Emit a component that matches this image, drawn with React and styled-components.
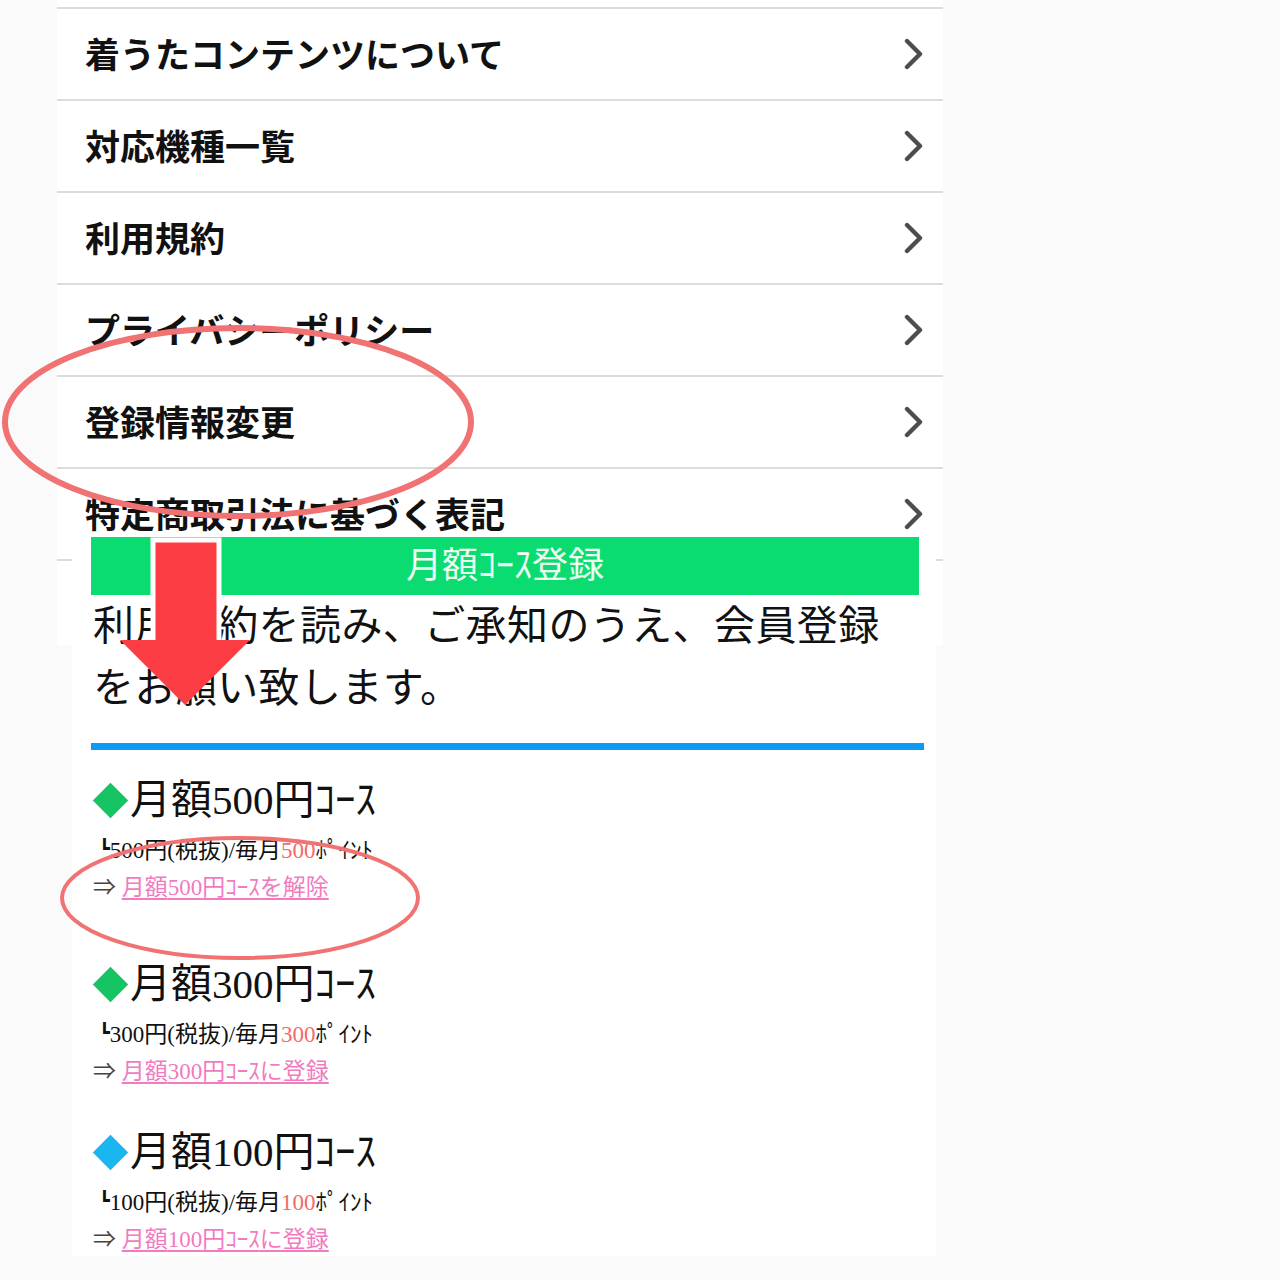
import styled, { createGlobalStyle } from "styled-components";

const GlobalStyle = createGlobalStyle`
  body {
    margin: 0;
    background: #fafafa;
    font-family: "Noto Sans CJK JP", sans-serif;
  }
`;

const Page = styled.div`
  position: relative;
  width: 1280px;
  min-height: 1280px;
  overflow: hidden;
`;

const MenuPanel = styled.ul`
  list-style: none;
  margin: 0 0 0 57px;
  padding: 7px 0 84px;
  width: 886px;
  background: #fff;
`;

const MenuRow = styled.li`
  display: flex;
  align-items: center;
  justify-content: space-between;
  height: 90px;
  padding: 0 20px 0 28px;
  border-top: 2px solid #dcdcdc;
  &:last-child {
    border-bottom: 2px solid #dcdcdc;
  }
`;

const MenuLabel = styled.span`
  font-family: "Noto Sans CJK JP", sans-serif;
  font-weight: 700;
  font-size: 35px;
  line-height: 40px;
  padding-bottom: 3px;
  color: #111;
`;

const CoursePanel = styled.section`
  position: relative;
  z-index: 1;
  margin: -108px 0 0 72px;
  width: 828px;
  padding: 0 17px 0 19px;
  background: #fff;
  font-family: "Liberation Serif", "Noto Sans CJK JP", serif;
  color: #111;
`;

const PanelHeader = styled.h2`
  margin: 0;
  height: 58px;
  background: #0bdc72;
  color: #eefff2;
  font-weight: 400;
  font-size: 36px;
  line-height: 58px;
  text-align: center;
  font-family: inherit;
`;

const Notice = styled.p`
  margin: 0;
  padding-left: 2px;
  width: 800px;
  font-size: 41px;
  line-height: 62px;
  letter-spacing: 0.4px;
`;

const BlueRule = styled.hr`
  margin: 24px -5px 0 0;
  height: 7px;
  border: 0;
  background: #0d9af6;
`;

const CourseList = styled.div`
  padding-top: 20px;
`;

const Course = styled.div`
  margin-bottom: ${({ $gap }) => $gap}px;
  &:last-child {
    margin-bottom: 0;
  }
`;

const CourseTitle = styled.div`
  display: flex;
  align-items: center;
  height: 60px;
  font-size: 41px;
  line-height: 60px;
  padding-left: 7px;
`;

const Diamond = styled.span`
  display: inline-block;
  flex: none;
  width: 25px;
  height: 25px;
  margin-right: 7px;
  background: ${({ $color }) => $color};
  transform: rotate(45deg);
`;

const CourseDetail = styled.div`
  height: 42px;
  font-size: 23px;
  line-height: 42px;
  padding-left: 8px;
`;

const Corner = styled.span`
  position: relative;
  top: -3px;
  font-family: "DejaVu Sans", sans-serif;
  font-weight: 700;
  font-size: 18px;
`;

const Points = styled.span`
  color: #f46a6a;
`;

const CourseAction = styled.div`
  height: 32px;
  font-size: 23px;
  line-height: 32px;
  padding-left: 2px;
  color: #444;
`;

const CourseLink = styled.a`
  color: #f27abf;
  text-decoration: underline;
  text-underline-offset: 3px;
  cursor: pointer;
`;

const Annotations = styled.svg`
  position: absolute;
  left: 0;
  top: 0;
  z-index: 2;
  pointer-events: none;
`;

const Chevron = () => (
  <svg width="20" height="32" viewBox="0 0 20 32">
    <polyline
      points="4,3 17,16 4,29"
      fill="none"
      stroke="#4d4d4d"
      strokeWidth="4.4"
      strokeLinecap="round"
      strokeLinejoin="round"
    />
  </svg>
);

const menuItems = [
  "着うたコンテンツについて",
  "対応機種一覧",
  "利用規約",
  "プライバシーポリシー",
  "登録情報変更",
  "特定商取引法に基づく表記",
];

const courses = [
  { price: "500", color: "#17c463", action: "を解除", gap: 50 },
  { price: "300", color: "#17c463", action: "に登録", gap: 34 },
  { price: "100", color: "#1ab6f2", action: "に登録", gap: 0 },
];

export default function App() {
  return (
    <Page>
      <GlobalStyle />
      <MenuPanel>
        {menuItems.map((label) => (
          <MenuRow key={label}>
            <MenuLabel>{label}</MenuLabel>
            <Chevron />
          </MenuRow>
        ))}
      </MenuPanel>

      <CoursePanel>
        <PanelHeader>月額ｺｰｽ登録</PanelHeader>
        <Notice>利用規約を読み、ご承知のうえ、会員登録をお願い致します。</Notice>
        <BlueRule />
        <CourseList>
          {courses.map(({ price, color, action, gap }) => (
            <Course key={price} $gap={gap}>
              <CourseTitle>
                <Diamond $color={color} />
                月額{price}円ｺｰｽ
              </CourseTitle>
              <CourseDetail>
                <Corner>┗</Corner>
                {price}円(税抜)/毎月<Points>{price}</Points>ﾎﾟｲﾝﾄ
              </CourseDetail>
              <CourseAction>
                ⇒ <CourseLink>月額{price}円ｺｰｽ{action}</CourseLink>
              </CourseAction>
            </Course>
          ))}
        </CourseList>
      </CoursePanel>

      <Annotations width="1280" height="1280" viewBox="0 0 1280 1280">
        <ellipse cx="238" cy="422" rx="233" ry="94" fill="none" stroke="#f07272" strokeWidth="6" />
        <ellipse cx="240" cy="898" rx="178" ry="60" fill="none" stroke="#f07272" strokeWidth="4" />
        <rect x="153" y="540" width="66" height="104" fill="#fc3d43" stroke="#fff" strokeWidth="5" />
        <polygon points="120,640 250,640 185,705" fill="#fc3d43" />
        <rect x="156" y="630" width="60" height="14" fill="#fc3d43" />
      </Annotations>
    </Page>
  );
}
